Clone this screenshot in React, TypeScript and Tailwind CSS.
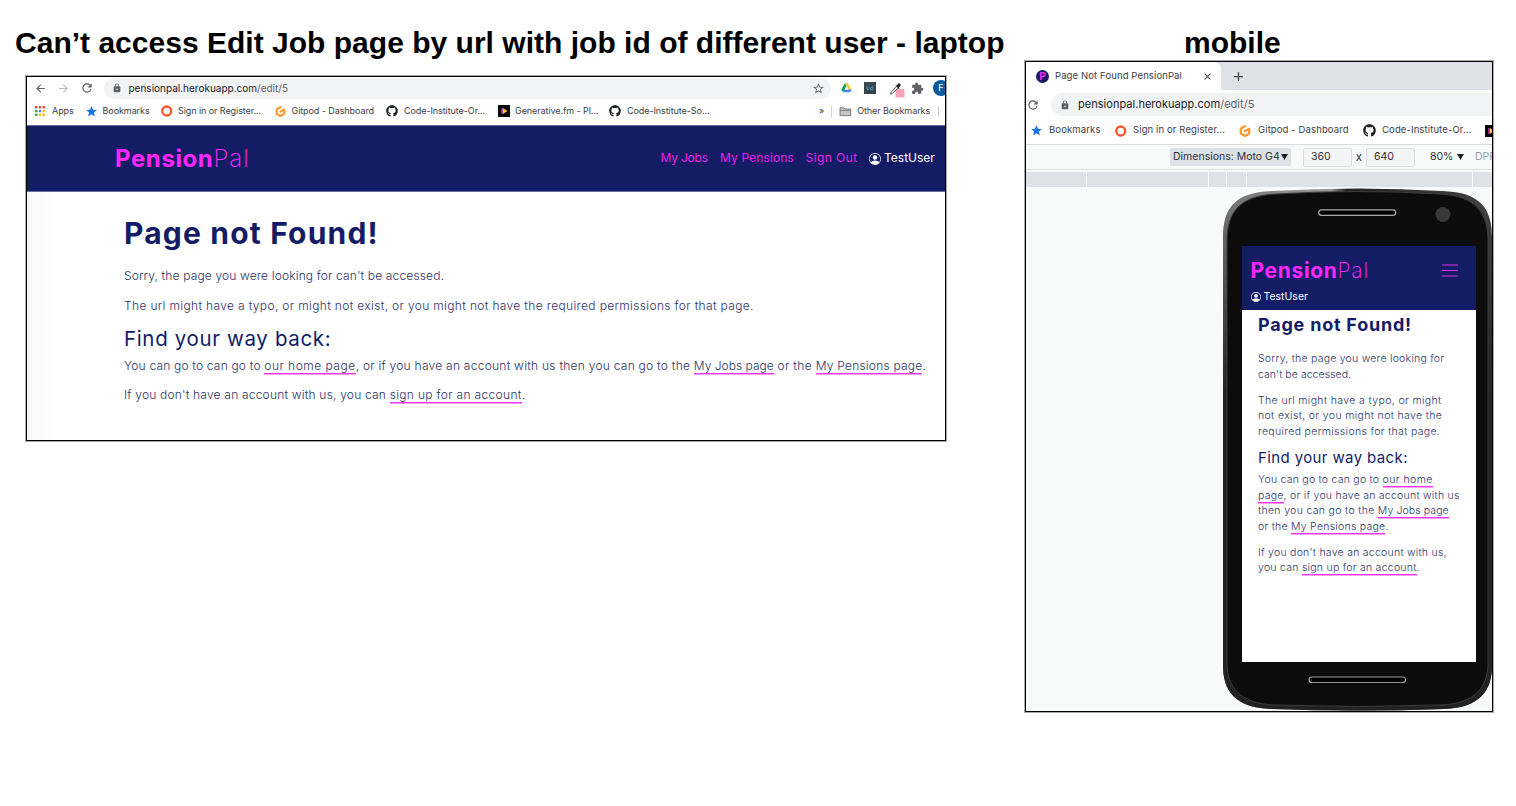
import React from "react";
import { MdArrowBack, MdArrowForward, MdRefresh, MdLock, MdStar, MdStarBorder, MdExtension, MdClose, MdAdd } from "react-icons/md";
import { FaGithub } from "react-icons/fa";
import { BsPersonCircle } from "react-icons/bs";
import { SiGitpod } from "react-icons/si";

function T({ c = "", children }: { c?: string; children: React.ReactNode }) {
  return <span className={"whitespace-nowrap " + c}>{children}</span>;
}

function Apps() {
  const colors = ["#ea4335", "#ea4335", "#ea4335", "#34a853", "#4285f4", "#fbbc05", "#34a853", "#fbbc05", "#fbbc05"];
  return (
    <svg viewBox="0 0 10 10" className="size-[10px]">
      {colors.map((f, i) => (
        <rect key={i} x={(i % 3) * 3.8} y={Math.floor(i / 3) * 3.8} width="2.4" height="2.4" fill={f} />
      ))}
    </svg>
  );
}

function Ring() {
  return (
    <svg viewBox="0 0 12 12" className="size-[12px]">
      <circle cx="5.700" cy="6" r="4.500" fill="none" stroke="#ff5630" strokeWidth="2.300" />
    </svg>
  );
}

function Play() {
  return (
    <svg viewBox="0 0 12 12" className="size-[12px] shrink-0">
      <rect width="12" height="12" fill="#050505" />
      <path d="M3.300 2.700v6.600l2.400-1.400V4z" fill="#b52fc2" />
      <path d="M4.800 3 9.600 6 4.800 9z" fill="#f5c431" />
    </svg>
  );
}

function Drive() {
  return (
    <svg viewBox="0 0 12 11" className="h-[10px] w-[11px]">
      <path d="M4.200.5h3.600L4 7.200 2.200 10.200.200 7.200z" fill="#0f9d58" />
      <path d="M4.200.5h3.600l4 6.700H8.100z" fill="#ffcd40" />
      <path d="M4 7.200h7.800l-1.800 3H2.200z" fill="#4285f4" />
      <path d="M6 3.600 8.100 7.200H3.900z" fill="#fff" />
    </svg>
  );
}

function Folder() {
  return (
    <svg viewBox="0 0 13 11" className="h-[11px] w-[13px]">
      <path d="M1 9.600V1.800h3.800l1 1.200h6v6.600z" fill="#c4c4c4" stroke="#777" strokeWidth=".9" />
      <path d="M1 4.400h10.800" stroke="#777" strokeWidth=".8" />
    </svg>
  );
}

function Dropper() {
  return (
    <svg viewBox="0 0 16 16" className="size-[16px]">
      <rect x="6.500" y="7" width="9" height="8.500" rx="1" fill="#f6a5b8" />
      <path d="M7.300 4.600 2 10.300 1.600 12.200 3.400 11.800 8.800 6.200" fill="#dfe8df" stroke="#4c5a52" strokeWidth=".9" />
      <path d="M6.400 3.600 9.800 7l.7-.8-.6-.7 1.500-1.700c1-1.300-1-3.200-2.200-2.100L7.700 3.400 7.100 2.900z" fill="#222" />
    </svg>
  );
}

function Caret() {
  return (
    <svg viewBox="0 0 7 6" className="h-[6px] w-[7px] shrink-0">
      <path d="M0 0h7L3.500 6z" fill="#202124" />
    </svg>
  );
}

function Mark({ w, icon, label }: { w: string; icon: React.ReactNode; label: string }) {
  return (
    <div className={"flex shrink-0 items-center " + w}>
      <span className="flex w-[17px] shrink-0 items-center">{icon}</span>
      <T>{label}</T>
    </div>
  );
}

function A({ c = "", children }: { c?: string; children: React.ReactNode }) {
  return <a className={"border-b border-[#f833f8] shadow-[0_1px_0_#fb9dfb] " + c}>{children}</a>;
}

function Laptop() {
  return (
    <div className="ml-[26px] mt-[13px] h-[365px] w-[920px] overflow-hidden border border-black bg-white shadow-[0_0_0_1px_#aaa]">
      <div className="flex h-[21px] items-center pt-[1px] text-[#5f6368]">
        <MdArrowBack className="ml-[7px] size-[13px] shrink-0" />
        <MdArrowForward className="ml-[10px] size-[13px] shrink-0 text-[#b9bbbe]" />
        <MdRefresh className="ml-[10px] size-[14px] shrink-0" />
        <div className="ml-[10px] flex h-[21px] w-[727px] shrink-0 items-center rounded-full bg-[#f1f3f4] pl-[8px] pr-[6px]">
          <MdLock className="mr-[6.5px] size-[10px]" />
          <T c="text-[10px] text-[#202124]">pensionpal.herokuapp.com<span className="text-[#5f6368]">/edit/5</span></T>
          <MdStarBorder className="ml-auto size-[13px]" />
        </div>
        <div className="ml-[10px] flex w-[11px] shrink-0"><Drive /></div>
        <div className="ml-[12px] flex size-[12px] shrink-0 items-center justify-center bg-[#37474f]">
          <svg viewBox="0 0 8 8" className="size-[8px]"><path d="M1 2v3q1 2 2 0V3M7 2 4 5l2 1 1-3" fill="none" stroke="#5d9cc4" strokeWidth=".8" /></svg>
        </div>
        <div className="ml-[12.5px] mt-[3px] w-[16px] shrink-0"><Dropper /></div>
        <MdExtension className="ml-[6.5px] size-[13px] shrink-0" />
        <div className="ml-[9px] flex size-[16px] shrink-0 items-center justify-center rounded-full bg-[#0b5a9c] text-[9px] text-white">F</div>
      </div>
      <div className="flex h-[27px] items-center pb-px pl-[8px] text-[9px] tracking-[-0.075px] text-[#3c4043]">
        <Mark w="w-[50.5px]" icon={<Apps />} label="Apps" />
        <Mark w="w-[75.5px]" icon={<MdStar className="-ml-[1px] size-[13px] text-[#1a73e8]" />} label="Bookmarks" />
        <Mark w="w-[113.5px]" icon={<Ring />} label="Sign in or Register..." />
        <Mark w="w-[112.500px]" icon={<SiGitpod className="size-[11px] text-[#ff9a33]" />} label="Gitpod - Dashboard" />
        <Mark w="w-[111px]" icon={<FaGithub className="-ml-px size-[12px] text-[#1b1f23]" />} label="Code-Institute-Or..." />
        <Mark w="w-[112px]" icon={<Play />} label="Generative.fm - Pl..." />
        <Mark w="w-[209px]" icon={<FaGithub className="-ml-px size-[12px] text-[#1b1f23]" />} label="Code-Institute-So..." />
        <span>»</span>
        <div className="ml-[7px] h-[11px] w-px bg-[#d0d0d0]" />
        <div className="ml-[7px] mr-[5px]"><Folder /></div>
        <T>Other Bookmarks</T>
        <div className="ml-[8px] h-[11px] w-px bg-[#d0d0d0]" />
      </div>
      <div className="flex h-[67px] items-center border-y border-[#6a6fa0] bg-[#151c66] pl-[88px] text-[12px] text-[#e81ee8]">
        <div className="flex w-[545.5px] text-[24px] text-[#ff26ff]">
          <T c="font-bold tracking-[0.6px]">Pension</T>
          <T c="font-extralight tracking-[1.100px]">Pal</T>
        </div>
        <div className="w-[59.5px] pb-px"><T c="tracking-[-0.2px]">My Jobs</T></div>
        <div className="w-[85.5px] pb-px"><T c="tracking-[0.12px]">My Pensions</T></div>
        <div className="w-[63.5px] pb-px"><T c="tracking-[0.43px]">Sign Out</T></div>
        <BsPersonCircle className="mr-[3px] size-[12px] text-white" />
        <T c="pb-px text-white">TestUser</T>
      </div>
      <div className="flex h-[249px] flex-col bg-gradient-to-r from-[#f8f8f8] to-white to-[3%] pl-[97px] text-[#151c66]">
        <div className="mt-[23px] h-[36px] text-[30px] font-bold leading-[36px] tracking-[1.180px]"><T>Page not Found!</T></div>
        <div className="text-[12px] font-light leading-[18px] text-[#2c3468]">
          <div className="mt-[16px] tracking-[0.15px]"><T>Sorry, the page you were looking for can't be accessed.</T></div>
          <div className="mt-[12px] tracking-[0.345px]"><T>The url might have a typo, or might not exist, or you might not have the required permissions for that page.</T></div>
        </div>
        <div className="mt-[10px] h-[28px] text-[20.500px] leading-[28px] tracking-[0.65px]"><T>Find your way back:</T></div>
        <div className="text-[12px] font-light leading-[18px] text-[#2c3468]">
          <div className="mt-[4px] tracking-[0.19px]">
            <T>
              You can go to can go to <A c="tracking-[0.49px]">our home page</A>
              <span className="tracking-[0.255px]">, or if you have an account with us then you can go to the </span>
              <A c="tracking-[0.02px]">My Jobs page</A>
              <span className="tracking-[0.35px]"> or the </span>
              <A c="tracking-[0.22px]">My Pensions page</A>.
            </T>
          </div>
          <div className="mt-[11px] tracking-[0.2px]"><T>If you don't have an account with us, you can <A c="tracking-[0.33px]">sign up for an account</A>.</T></div>
        </div>
      </div>
    </div>
  );
}

const BODY = "M0 50C0 22 10 4 50 3Q135-2 219 3C259 4 269 22 269 50V478C269 502 257 520 221 521Q134 524 48 521C12 520 0 502 0 478Z";

function PhoneBody() {
  return (
    <svg viewBox="0 0 270 524" className="absolute left-0 top-0 h-[524px] w-[270px]">
      <defs>
        <linearGradient id="rim" x1="0" x2="1" y1="0" y2="0">
          <stop offset="0" stopColor="#777" />
          <stop offset=".4" stopColor="#999" />
          <stop offset=".46" stopColor="#222" />
          <stop offset="1" stopColor="#444" />
        </linearGradient>
        <linearGradient id="side" x1="0" x2="0" y1="0" y2="1">
          <stop offset="0" stopColor="#222" stopOpacity="0" />
          <stop offset=".4" stopColor="#222" />
        </linearGradient>
      </defs>
      <path d={BODY} fill="url(#rim)" />
      <path d={BODY} fill="url(#side)" />
      <path d="M4 53C4 26 15 7.500 53 6Q135 1 216 6C254 7.500 265 26 265 53V475C265 498 253 515.500 218 517Q134 520 51 517C16 515.500 4 498 4 475Z" fill="#0c0c0c" stroke="#3c3c3c" strokeWidth="1" />
      <rect x="95.700" y="21.800" width="77" height="5.500" rx="2.750" fill="#000" stroke="#aaa" strokeWidth="1.200" />
      <rect x="86" y="489" width="96.500" height="5.500" rx="2.750" fill="#000" stroke="#999" strokeWidth="1.200" />
      <circle cx="220" cy="26.500" r="7.500" fill="#383838" />
      <circle cx="220" cy="26.500" r="1" fill="#10506a" />
    </svg>
  );
}

function Mobile() {
  return (
    <div className="ml-[21px] mt-[-2px] h-[651px] w-[468px] overflow-hidden border border-black bg-white shadow-[0_0_0_1px_#aaa]">
      <div className="flex h-[28px] bg-[#dee1e6]">
        <div className="flex w-[195px] shrink-0 items-center rounded-tr-[7px] bg-white pl-[10px]">
          <div className="flex size-[13px] items-center justify-center rounded-full bg-[#151c66] text-[10px] font-bold text-[#ff26ff]">P</div>
          <div className="ml-[6px] flex w-[147px]"><T c="text-[9.500px] tracking-[0.11px] text-[#3c4043]">Page Not Found PensionPal</T></div>
          <MdClose className="size-[11px] text-[#3c4043]" />
        </div>
        <div className="flex flex-1 items-center rounded-bl-[7px] bg-[#dee1e6] pl-[10px]"><MdAdd className="size-[15px] text-[#3c4043]" /></div>
      </div>
      <div className="flex h-[29px] items-center text-[#5f6368]">
        <MdRefresh className="size-[14px] shrink-0" />
        <div className="ml-[11px] flex h-[23px] w-[460px] shrink-0 items-center rounded-l-full bg-[#f1f3f4] pl-[9px]">
          <MdLock className="mr-[8px] size-[10px]" />
          <T c="text-[11px] tracking-[0.03px] text-[#202124]">pensionpal.herokuapp.com<span className="text-[#5f6368]">/edit/5</span></T>
        </div>
      </div>
      <div className="flex h-[26px] items-center overflow-hidden border-b border-[#dcdcdc] pb-[2px] pl-[6px] text-[9.500px] tracking-[0.12px] text-[#3c4043]">
        <Mark w="w-[84px]" icon={<MdStar className="-ml-[2px] size-[13px] text-[#1a73e8]" />} label="Bookmarks" />
        <Mark w="w-[125px]" icon={<span className="-ml-[1px]"><Ring /></span>} label="Sign in or Register..." />
        <Mark w="w-[124px]" icon={<SiGitpod className="-ml-[2px] size-[12px] text-[#ff9a33]" />} label="Gitpod - Dashboard" />
        <Mark w="w-[120px]" icon={<FaGithub className="-ml-[2px] size-[13px] text-[#1b1f23]" />} label="Code-Institute-Or..." />
        <Play />
      </div>
      <div className="flex h-[25px] items-center overflow-hidden border-b border-[#d8dadd] bg-[#f8faf9] text-[10.500px] text-[#303236]">
        <div className="ml-[144px] flex h-[18px] w-[121px] shrink-0 items-center justify-between rounded-[2px] bg-[#dee1e6] px-[3px]"><T>Dimensions: Moto G4</T><Caret /></div>
        <div className="ml-[12px] flex h-[19px] w-[49px] shrink-0 items-center rounded-[2px] border border-[#dcdfe2] bg-[#f4f5f5] pl-[7px]"><T>360</T></div>
        <span className="w-[14px] shrink-0 pt-[2px] text-center text-[11.500px]">x</span>
        <div className="flex h-[19px] w-[49px] shrink-0 items-center rounded-[2px] border border-[#dcdfe2] bg-[#f4f5f5] pl-[7px]"><T>640</T></div>
        <div className="ml-[15px] mr-[5px] w-[22px] shrink-0"><T>80%</T></div>
        <Caret />
        <span className="ml-[11px] text-[#9a9c9e]">DPR</span>
      </div>
      <div className="flex h-[17px] gap-px border-t-2 border-[#f8faf9] bg-white">
        <div className="w-[60px] bg-[#dee1e6]" />
        <div className="w-[121px] bg-[#dee1e6]" />
        <div className="w-[17px] bg-[#dee1e6]" />
        <div className="w-[18.500px] bg-[#dee1e6]" />
        <div className="w-[225px] bg-[#dee1e6]" />
        <div className="flex-1 bg-[#dee1e6]" />
      </div>
      <div className="flex h-[526px] bg-[#f8faf9] pl-[197px] pt-[1px]">
        <div className="relative h-[524px] w-[270px] shrink-0 pl-[19px] pt-[58px]">
          <PhoneBody />
          <div className="relative h-[416px] w-[234px] bg-white text-[#151c66]">
            <div className="h-[64px] bg-[#151c66] pl-[8.500px] pt-[11px]">
              <div className="flex h-[28px] items-center text-[21px] text-[#ff26ff]">
                <T c="font-bold tracking-[0.65px]">Pension</T>
                <div className="w-[104.500px]"><T c="font-extralight tracking-[0.900px]">Pal</T></div>
                <svg viewBox="0 0 16 13" className="h-[13px] w-[16px] mb-px"><path d="M0 1h16M0 6.500h16M0 12h16" stroke="#e02be6" strokeWidth="1.100" /></svg>
              </div>
              <div className="mt-[5px] flex h-[14px] items-center text-[10.500px] text-white">
                <BsPersonCircle className="mr-[3px] size-[10px]" /><T>TestUser</T>
              </div>
            </div>
            <div className="pl-[16px]">
              <div className="h-[30px] text-[18px] font-bold leading-[30px] tracking-[0.78px]"><T>Page not Found!</T></div>
              <div className="mt-[11px] flex flex-col items-start text-[10.500px] font-light leading-[15.500px] text-[#2c3468]">
                <T c="tracking-[0.24px]">Sorry, the page you were looking for</T>
                <T c="tracking-[0.05px]">can't be accessed.</T>
                <T c="mt-[10.500px] tracking-[0.37px]">The url might have a typo, or might</T>
                <T c="tracking-[0.36px]">not exist, or you might not have the</T>
                <T c="tracking-[0.33px]">required permissions for that page.</T>
              </div>
              <div className="mt-[9px] h-[20px] text-[15px] leading-[20px] tracking-[0.38px]"><T>Find your way back:</T></div>
              <div className="mt-[4px] flex flex-col items-start text-[10.500px] font-light leading-[15.500px] tracking-[0.25px] text-[#2c3468]">
                <T c="tracking-[0.24px]">You can go to can go to <A c="tracking-[0.45px]">our home</A></T>
                <T><A>page</A>, or if you have an account with us</T>
                <T c="tracking-[0.32px]">then you can go to the <A c="tracking-[0.1px]">My Jobs page</A></T>
                <T>or the <A>My Pensions page</A>.</T>
                <T c="mt-[10.500px]">If you don't have an account with us,</T>
                <T>you can <A>sign up for an account</A>.</T>
              </div>
            </div>
          </div>
        </div>
      </div>
    </div>
  );
}

export default function App() {
  return (
    <div className="flex h-[806px] w-[1516px] overflow-hidden bg-white font-['Inter',sans-serif]">
      <div className="w-[1004px] shrink-0">
        <div className="ml-[15px] mt-[22px] h-[41px] font-['Liberation_Sans',sans-serif] text-[30px] font-bold leading-[41px] tracking-[0.015px] text-black"><T>Can’t access Edit Job page by url with job id of different user - laptop</T></div>
        <Laptop />
      </div>
      <div className="shrink-0">
        <div className="ml-[180px] mt-[22px] h-[41px] font-['Liberation_Sans',sans-serif] text-[30px] font-bold leading-[41px] text-black"><T>mobile</T></div>
        <Mobile />
      </div>
    </div>
  );
}
